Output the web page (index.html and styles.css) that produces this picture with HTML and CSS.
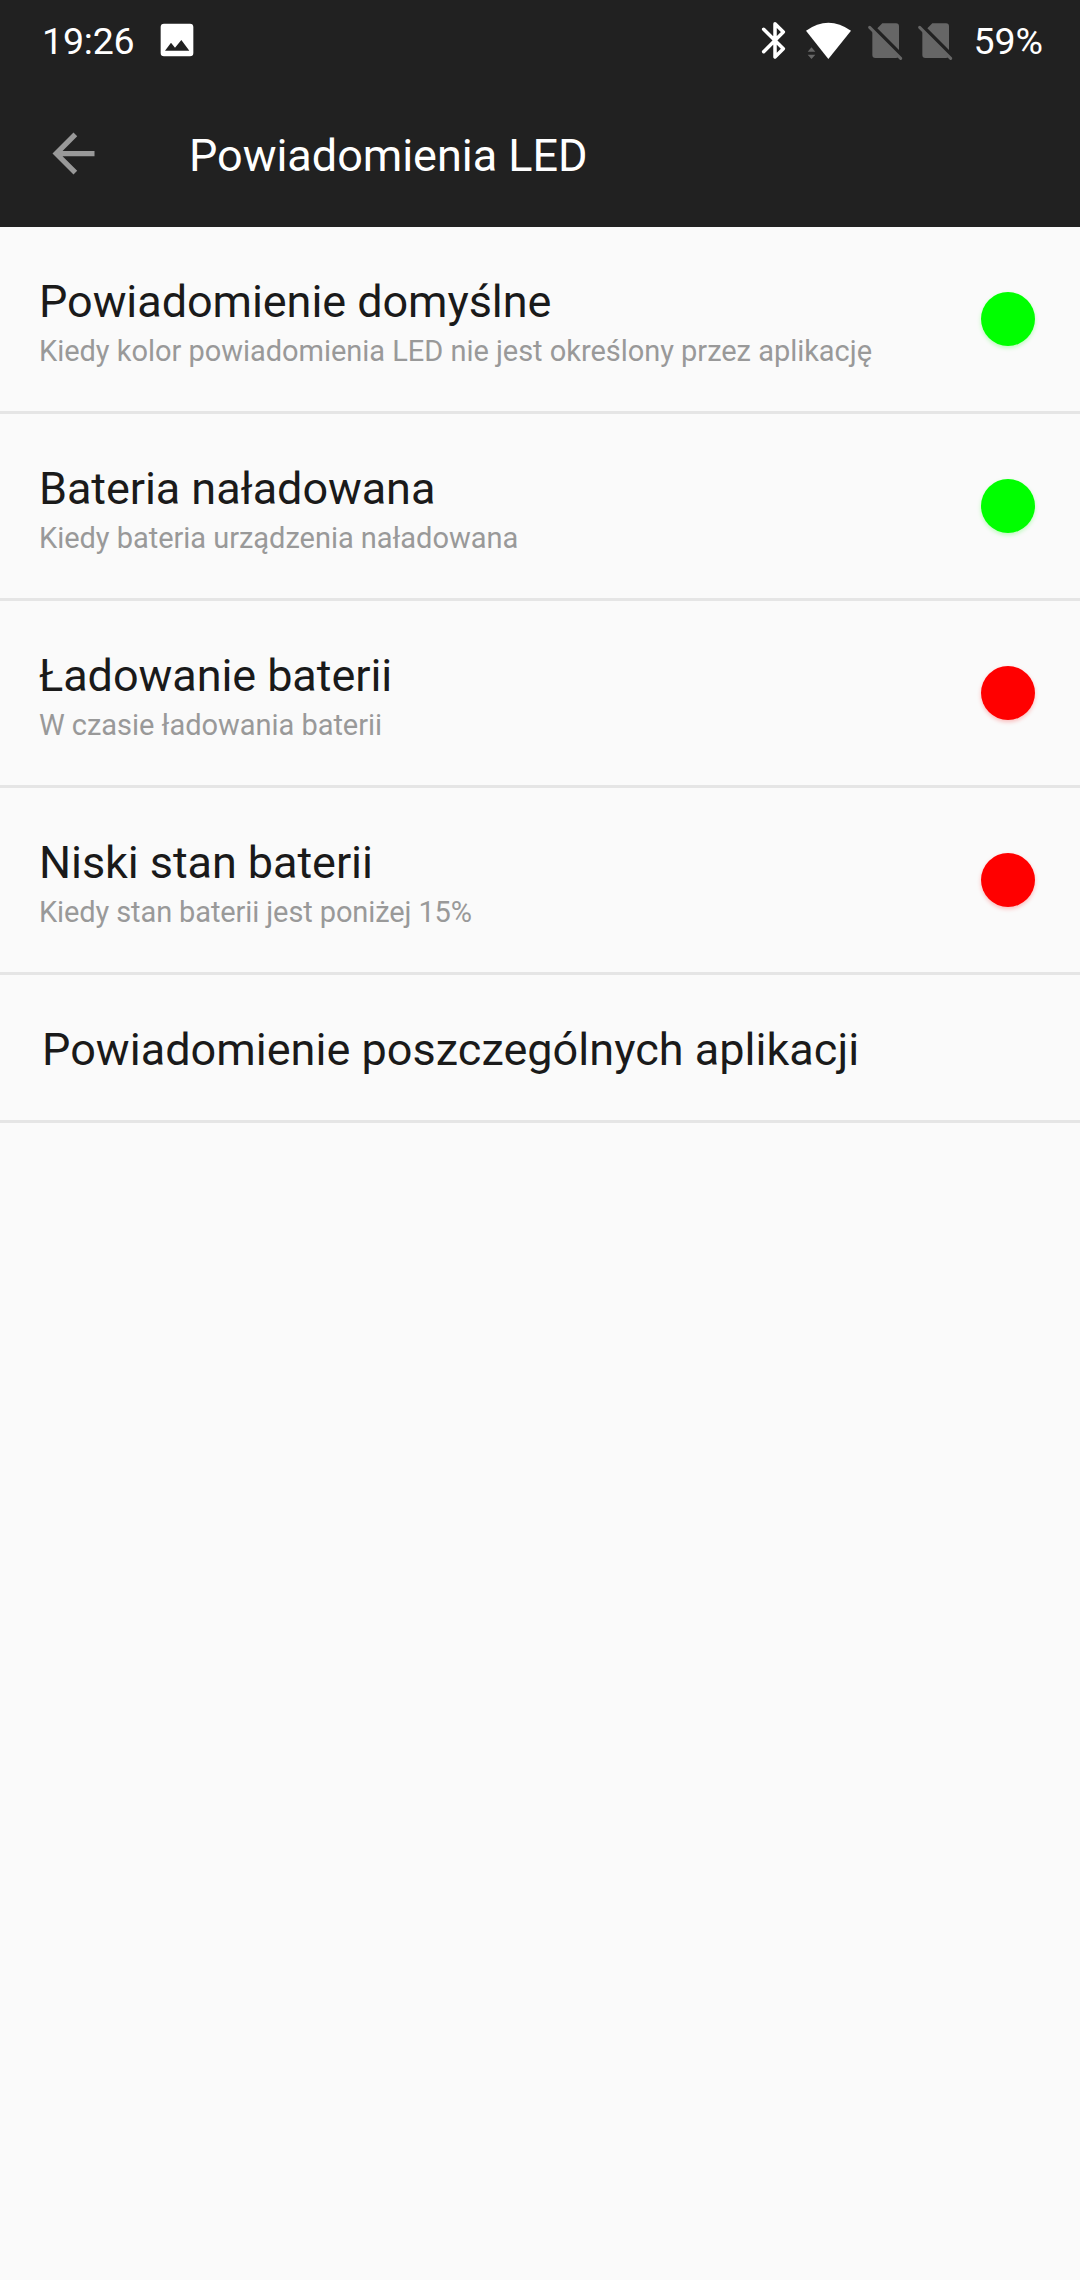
FILE: index.html
```html
<!DOCTYPE html>
<html lang="pl">
<head>
<meta charset="utf-8">
<title>Powiadomienia LED</title>
<link rel="stylesheet" href="styles.css">
</head>
<body>
<header class="header">
  <div class="status">
    <span class="status-text time">19:26</span>
    <svg class="icon-image" viewBox="480 69 102 102"><path fill="#fff" fill-rule="evenodd" d="M492 71H570Q580 71 580 81V159Q580 169 570 169H492Q482 169 482 159V81Q482 71 492 71ZM495 152H568L544 120L525 143L513 128Z"/></svg>
    <div class="status-right">
      <svg class="icon-bt" viewBox="63 60 75 117"><path fill="none" stroke="#fff" stroke-width="10.500" stroke-linecap="round" stroke-linejoin="round" d="M71 85L130 143L105 168V68L130 93L71 152"/></svg>
      <svg class="icon-wifi" viewBox="195 60 141 117"><path fill="#fff" d="M198 89Q265 41 333 89L265 174Z"/><path fill="#666" d="M203 152H226L214.500 139ZM203 161H226L214.500 174Z"/></svg>
      <svg class="icon-sim" viewBox="381 60 108 117"><path fill="#666" d="M412 82L427 67H468Q477 67 477 76V147ZM397 90L475 168Q472 171 468 171H406Q397 171 397 162Z"/><path stroke="#666" stroke-width="9" stroke-linecap="round" d="M389 79L482 172"/></svg>
      <svg class="icon-sim" viewBox="381 60 108 117"><path fill="#666" d="M412 82L427 67H468Q477 67 477 76V147ZM397 90L475 168Q472 171 468 171H406Q397 171 397 162Z"/><path stroke="#666" stroke-width="9" stroke-linecap="round" d="M389 79L482 172"/></svg>
      <span class="status-text percent">59%</span>
    </div>
  </div>
  <div class="appbar">
    <svg class="icon-back" viewBox="0 0 24 24"><path fill="#999" d="M20 11H7.830l5.590-5.590L12 4l-8 8 8 8 1.410-1.410L7.830 13H20v-2z"/></svg>
    <h1 class="heading">Powiadomienia LED</h1>
  </div>
</header>
<main>
  <section class="row">
    <div><h2 class="title">Powiadomienie domyślne</h2><p class="summary">Kiedy kolor powiadomienia LED nie jest określony przez aplikację</p></div>
    <span class="dot green"></span>
  </section>
  <section class="row">
    <div><h2 class="title">Bateria naładowana</h2><p class="summary">Kiedy bateria urządzenia naładowana</p></div>
    <span class="dot green"></span>
  </section>
  <section class="row">
    <div><h2 class="title">Ładowanie baterii</h2><p class="summary">W czasie ładowania baterii</p></div>
    <span class="dot red"></span>
  </section>
  <section class="row">
    <div><h2 class="title">Niski stan baterii</h2><p class="summary level">Kiedy stan baterii jest poniżej 15%</p></div>
    <span class="dot red"></span>
  </section>
  <section class="row single">
    <h2 class="title">Powiadomienie poszczególnych aplikacji</h2>
  </section>
</main>
</body>
</html>
```

FILE: styles.css
```css
* { box-sizing: border-box; margin: 0; padding: 0; }
body { background: #fafafa; color: #1a1a1a; font-family: Roboto, "Noto Sans", sans-serif; min-height: 2280px; }
svg { display: block; flex: none; }
h1, h2 { font-weight: 400; white-space: nowrap; }
.header { height: 227px; background: #212121; color: #fff; }
.status { display: flex; align-items: center; height: 80px; padding: 0 37px 0 42px; }
.status-text { font-size: 37.5px; line-height: 44px; padding-top: 2px; }
.time { width: 93px; letter-spacing: -0.2px; }
.icon-image { width: 34px; height: 34px; margin-left: 25px; }
.status-right { display: flex; align-items: center; margin-left: auto; }
.icon-bt { width: 25px; height: 39px; margin-right: 19px; }
.icon-wifi { width: 47px; height: 39px; margin-right: 15px; }
.icon-sim { width: 36px; height: 39px; margin-right: 14px; }
.percent { margin-left: 6px; }
.appbar { display: flex; align-items: center; height: 147px; padding: 0 42px; }
.icon-back { width: 63px; height: 63px; }
.heading { margin-left: 84px; padding-top: 5px; font-size: 45px; line-height: 54px; letter-spacing: -0.04px; }
.row { display: flex; justify-content: space-between; align-items: flex-start; height: 187px; padding: 48px 45px 0 39px; border-bottom: 3px solid #e5e5e5; }
.title { font-size: 45px; line-height: 54px; letter-spacing: -0.07px; }
.summary { font-size: 29px; line-height: 36px; margin-top: 4px; color: #999; white-space: nowrap; letter-spacing: -0.03px; }
.level { letter-spacing: -0.11px; }
.dot { width: 54px; height: 54px; margin-top: 17px; border-radius: 50%; }
.green { background: #0f0; box-shadow: 0 2px 4px rgba(0, 255, 0, .25); }
.red { background: #f00; box-shadow: 0 2px 4px rgba(255, 0, 0, .25); }
.single { height: 148px; padding-left: 42px; }
.single .title { letter-spacing: 0.03px; }
```
